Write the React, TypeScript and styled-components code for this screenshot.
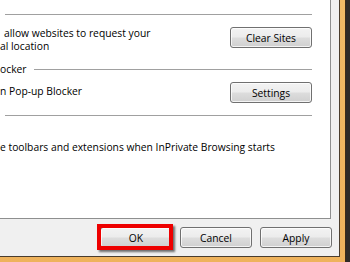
import * as React from 'react';
import styled, { createGlobalStyle } from 'styled-components';

const GlobalStyle = createGlobalStyle`
  html, body {
    margin: 0;
    padding: 0;
  }
  body {
    width: 350px;
    height: 262px;
    overflow: hidden;
    background: #3a322b;
    font-family: "Open Sans", "Liberation Sans", sans-serif;
    color: #000;
  }
`;

function App() {
  return (
    <Page>
      <GlobalStyle />
      <Frame>
        <Client>
          <TabPage>
            <GroupLine $indent={5} $top={14} />
            <SettingRow $top={12}>
              <Label $indent={4}>
                allow websites to request your
                <br />
                al location
              </Label>
              <DialogButton $width={82}>Clear Sites</DialogButton>
            </SettingRow>

            <GroupHeader>
              <span>ocker</span>
              <HeaderLine />
            </GroupHeader>
            <SettingRow $top={6} $center>
              <Label $lift={2}>n Pop-up Blocker</Label>
              <DialogButton $width={82}>Settings</DialogButton>
            </SettingRow>

            <GroupLine $indent={5} $top={12} />
            <Label $top={25}>
              e toolbars and extensions when InPrivate Browsing starts
            </Label>
          </TabPage>

          <ButtonBar>
            <Highlighted>
              <DialogButton $width={72}>OK</DialogButton>
              <RedBox />
            </Highlighted>
            <DialogButton $width={72}>Cancel</DialogButton>
            <DialogButton $width={72}>Apply</DialogButton>
          </ButtonBar>
        </Client>
      </Frame>
    </Page>
  );
}

const Page = styled.div`
  width: 350px;
  height: 262px;
  overflow: hidden;
  background: linear-gradient(to right, #6a5a48 0px, #3f372f 2px, #2e2a27 100%);
`;

const Frame = styled.div`
  box-sizing: border-box;
  width: 346px;
  height: 268px;
  padding: 0 5px 0 0;
  background: linear-gradient(to bottom, #f0ba66, #eeb25c);
  border-right: 1px solid #3b2a18;
  border-bottom: 1px solid #3b2a18;
  border-bottom-right-radius: 7px;
`;

const Client = styled.div`
  box-sizing: border-box;
  width: 340px;
  height: 257px;
  display: flex;
  flex-direction: column;
  background: #f0f0f0;
  border-right: 1px solid #4a3d2e;
  border-bottom: 1px solid #4a3d2e;
`;

const TabPage = styled.div`
  box-sizing: border-box;
  width: 331px;
  height: 219px;
  padding-right: 18px;
  display: flex;
  flex-direction: column;
  background: #ffffff;
  border-right: 1px solid #8e8f8f;
  border-bottom: 1px solid #8e8f8f;
`;

const GroupLine = styled.div<{ $indent: number; $top: number }>`
  height: 1px;
  margin: ${(p) => p.$top}px 0 0 ${(p) => p.$indent}px;
  background: #a0a0a0;
`;

const SettingRow = styled.div<{ $top: number; $center?: boolean }>`
  display: flex;
  justify-content: space-between;
  align-items: ${(p) => (p.$center ? 'center' : 'flex-start')};
  margin-top: ${(p) => p.$top}px;
`;

const Label = styled.div<{ $indent?: number; $top?: number; $lift?: number }>`
  font-size: 10.3px;
  line-height: 13px;
  white-space: nowrap;
  text-indent: ${(p) => p.$indent ?? 0}px;
  margin-top: ${(p) => p.$top ?? 0}px;
  padding-bottom: ${(p) => p.$lift ?? 0}px;
`;

const GroupHeader = styled.div`
  display: flex;
  align-items: center;
  margin-top: 10px;
  font-size: 10.3px;
  line-height: 13px;
`;

const HeaderLine = styled.div`
  flex: 1;
  height: 1px;
  margin-left: 7px;
  background: #a0a0a0;
`;

const DialogButton = styled.button<{ $width: number }>`
  box-sizing: border-box;
  width: ${(p) => p.$width}px;
  height: 21px;
  padding: 0;
  font-family: inherit;
  font-size: 10.3px;
  color: #000;
  border: 1px solid #707070;
  border-radius: 3px;
  background: linear-gradient(
    to bottom,
    #f3f3f3 0%,
    #ececec 48%,
    #dddddd 52%,
    #d0d0d0 100%
  );
  box-shadow: inset 0 0 0 1px rgba(255, 255, 255, 0.75);
`;

const ButtonBar = styled.div`
  display: flex;
  justify-content: flex-end;
  gap: 8px;
  padding: 8px 7px 0 0;
`;

const Highlighted = styled.div`
  position: relative;
  display: flex;
`;

const RedBox = styled.div`
  position: absolute;
  left: -3px;
  top: -3px;
  width: 76px;
  height: 26px;
  box-sizing: border-box;
  border: 4px solid #ee0000;
  box-shadow: 2px 2px 2px rgba(0, 0, 0, 0.55);
  pointer-events: none;
`;

export default App;
